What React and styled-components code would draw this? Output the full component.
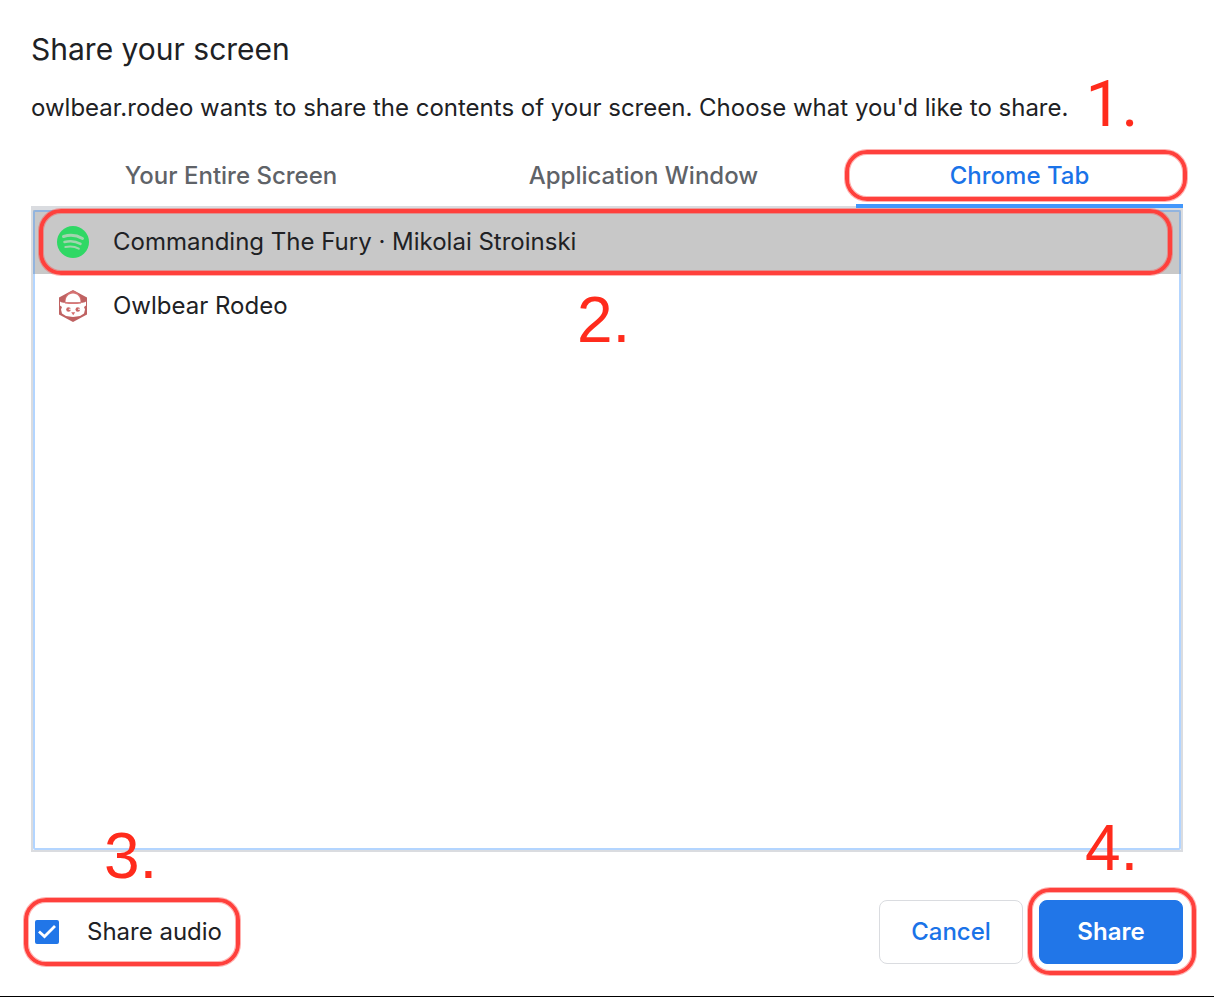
import React, { useState } from "react";
import styled, { createGlobalStyle, css } from "styled-components";

const GlobalStyle = createGlobalStyle`
  *, *::before, *::after { box-sizing: border-box; }
  body {
    margin: 0;
    background: #fff;
    color: #202124;
    font-family: Inter, "Liberation Sans", sans-serif;
    font-size: 24px;
    line-height: 32px;
  }
  button, input { font: inherit; }
`;

const Dialog = styled.main`
  display: flex;
  flex-direction: column;
  min-height: 100vh;
  padding: 29px 31px 32px;
  border-bottom: 1px solid #000;
`;

const Title = styled.h1`
  margin: 0 0 23px;
  font-size: 30px;
  line-height: 40px;
  font-weight: 400;
`;

const Message = styled.p`
  position: relative;
  align-self: flex-start;
  margin: 0 0 20px;
`;

const TabStrip = styled.div`
  display: flex;
  gap: 4px;
  box-shadow: inset 0 -2px #dadce0;
`;

const Tab = styled.button`
  position: relative;
  flex: 1 1 auto;
  height: 64px;
  padding: 0;
  border: solid transparent;
  border-width: 4px 0;
  background: none;
  color: #5f6368;
  font-weight: 500;
  cursor: pointer;
  ${(p) =>
    p.$active &&
    css`
      color: #1a73e8;
      border-bottom-color: #4297fb;
    `}
`;

const SourceList = styled.div`
  position: relative;
  flex: 1;
  border: 2px solid #dadce0;

  &::after {
    content: "";
    position: absolute;
    inset: 0;
    border: 2px solid rgba(64, 150, 255, 0.4);
    border-radius: 2px;
    pointer-events: none;
  }
`;

const SourceRow = styled.button`
  position: relative;
  display: flex;
  align-items: center;
  gap: 24px;
  width: 100%;
  height: 64px;
  padding: 0 24px;
  border: 0;
  background: ${(p) => (p.$selected ? "#c8c8c8" : "transparent")};
  color: inherit;
  text-align: left;
  cursor: pointer;
`;

const Icon = styled.svg`
  flex: none;
  width: 32px;
  height: 32px;
`;

const Footer = styled.footer`
  display: flex;
  align-items: center;
  gap: 16px;
  margin-top: 48px;
`;

const AudioOption = styled.label`
  position: relative;
  display: flex;
  align-items: center;
  gap: 28px;
  margin-right: auto;
  padding-left: 4px;
  cursor: pointer;
`;

const CheckBox = styled.span`
  display: grid;
  width: 24px;
  height: 24px;

  & > * { grid-area: 1 / 1; }
  svg { pointer-events: none; }
`;

const CheckInput = styled.input`
  appearance: none;
  width: 24px;
  height: 24px;
  margin: 0;
  border: 2px solid #5f6368;
  border-radius: 2px;
  &:checked {
    border-color: #2176e8;
    background: #2176e8;
  }
`;

const ActionButton = styled.button`
  position: relative;
  width: 144px;
  height: 64px;
  padding: 0;
  border: 1px solid ${(p) => (p.$primary ? "#2176e8" : "#dadce0")};
  border-radius: 8px;
  background: ${(p) => (p.$primary ? "#2176e8" : "#fff")};
  color: ${(p) => (p.$primary ? "#fff" : "#1a73e8")};
  font-weight: ${(p) => (p.$primary ? 600 : 500)};
  cursor: pointer;
`;

/* Hand-marked outline lying over the control it surrounds. */
const Highlight = styled.span`
  position: absolute;
  z-index: 1;
  inset: ${(p) => p.$inset};
  border: 4px solid #ff403c;
  border-radius: 22px;
  box-shadow: 0 0 0 1px rgba(255, 64, 60, 0.4), inset 0 0 0 1px rgba(255, 64, 60, 0.4);
  pointer-events: none;
`;

const StepNumber = styled.span`
  position: absolute;
  z-index: 2;
  top: ${(p) => p.$top};
  left: ${(p) => p.$left};
  color: #ff2b1c;
  font-family: ${(p) => (p.$plain ? "Roboto, sans-serif" : '"Liberation Sans", Arial, sans-serif')};
  font-size: 64px;
  line-height: 64px;
  font-weight: 400;
  white-space: nowrap;
  pointer-events: none;
`;

const SpotifyIcon = () => (
  <Icon viewBox="0 0 32 32" aria-hidden="true">
    <circle cx="16" cy="16" r="16" fill="#2fd865" />
    <g fill="none" stroke="#a0d5ae" strokeLinecap="round">
      <path d="M6.500 10.500c6-1.800 13.500-1.200 19 2" strokeWidth="3" />
      <path d="M7.500 16c5.500-1.500 11.500-.8 16 1.900" strokeWidth="2.500" />
      <path d="M8.300 21c4.700-1 9.500-.6 13.500 1.700" strokeWidth="2" />
    </g>
  </Icon>
);

const OwlbearIcon = () => (
  <Icon viewBox="0 0 32 32" aria-hidden="true">
    <path d="M16 0 30 7.500v17L16 32 2 24.500v-17z" fill="#bf6262" />
    <path d="M16 1c3 0 7 3 8.500 9l-1.500 2H9l-1.500-2C9 4 13 1 16 1z" fill="#d67272" />
    <path d="M8.500 12c0-5 3-8.500 7.500-8.500s7.500 3.500 7.500 8.500z" fill="#fff" />
    <path d="M3 11.500c2 1.500 4 1.300 6 1.300h14c2 0 4 .2 6-1.300v4l-2 1.500 1 2.500-1 4-4 2.500-7 1-7-1-4-2.500-1-4 1-2.500L3 15.500z" fill="#fff" />
    <path d="M8 12.800q8 1.400 16 0" fill="none" stroke="#db7777" strokeWidth="1.200" />
    <g fill="#ca6666">
      <circle cx="11.500" cy="19.500" r="2.300" />
      <circle cx="20.800" cy="19.500" r="2.300" />
    </g>
    <path d="M11.800 18.700h2.400v1h-2.400zM21.100 18.700h2.400v1h-2.400z" fill="#fff" />
    <path d="M14.200 22.300h4l-2 2.900z" fill="#d56b6b" />
  </Icon>
);

const TABS = ["Your Entire Screen", "Application Window", "Chrome Tab"];

const SOURCES = [
  { name: "Commanding The Fury · Mikolai Stroinski", Glyph: SpotifyIcon },
  { name: "Owlbear Rodeo", Glyph: OwlbearIcon },
];

export default function App() {
  const [tab, setTab] = useState(2);
  const [source, setSource] = useState(0);
  const [audio, setAudio] = useState(true);

  return (
    <>
      <GlobalStyle />
      <Dialog>
        <Title>Share your screen</Title>
        <Message>
          owlbear.rodeo wants to share the contents of your screen. Choose what you'd like to share.
          <StepNumber $plain $top="-19px" $left="calc(100% + 17px)">1.</StepNumber>
        </Message>

        <TabStrip role="tablist">
          {TABS.map((label, i) => (
            <Tab key={label} type="button" role="tab" aria-selected={tab === i} $active={tab === i} onClick={() => setTab(i)}>
              {label}
              {i === 2 && <Highlight $inset="2px -4px 3px -11px" />}
            </Tab>
          ))}
        </TabStrip>

        <SourceList role="listbox" aria-label="Chrome tabs">
          {SOURCES.map(({ name, Glyph }, i) => (
            <SourceRow key={name} type="button" role="option" aria-selected={source === i} $selected={source === i} onClick={() => setSource(i)}>
              <Glyph />
              {name}
              {i === 0 && <Highlight $inset="-1px 9px -1px 6px" />}
              {i === 1 && <StepNumber $top="14px" $left="calc(50% - 30px)">2.</StepNumber>}
            </SourceRow>
          ))}
        </SourceList>

        <Footer>
          <AudioOption>
            <CheckBox>
              <CheckInput type="checkbox" checked={audio} onChange={(e) => setAudio(e.target.checked)} />
              {audio && (
                <svg viewBox="0 0 24 24" width="24" height="24" aria-hidden="true">
                  <path d="m4 11.500 5.500 5L20 6" fill="none" stroke="#fff" strokeWidth="2.800" />
                </svg>
              )}
            </CheckBox>
            Share audio
            <Highlight $inset="-18px -18px -18px -7px" />
            <StepNumber $top="-92px" $left="73px">3.</StepNumber>
          </AudioOption>
          <ActionButton type="button">Cancel</ActionButton>
          <ActionButton type="button" $primary>
            Share
            <Highlight $inset="-13px -14px -12px -12px" />
            <StepNumber $top="-85px" $left="45px">4.</StepNumber>
          </ActionButton>
        </Footer>
      </Dialog>
    </>
  );
}
